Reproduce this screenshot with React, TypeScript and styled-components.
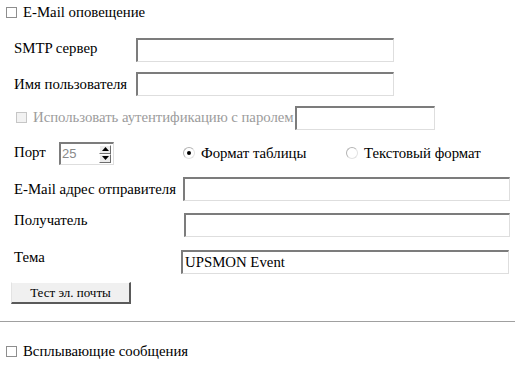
import styled, { createGlobalStyle } from "styled-components";

const GlobalStyle = createGlobalStyle`
  body {
    margin: 0;
    background: #ffffff;
  }
`;

const Page = styled.div`
  width: 515px;
  height: 365px;
  overflow: hidden;
  font-family: "Liberation Serif", "DejaVu Serif", serif;
  font-size: 14.8px;
  color: #000000;
`;

const CheckRow = styled.label<{ $disabled?: boolean }>`
  display: flex;
  align-items: center;
  gap: 6px;
  color: ${(p) => (p.$disabled ? "#9c9c9c" : "#000")};
  white-space: nowrap;
`;

const AuthCheck = styled(CheckRow)`
  width: 279px;
  margin-left: 2px;
  flex: none;
  letter-spacing: -0.05px;
`;

const Box = styled.span<{ $disabled?: boolean }>`
  display: inline-block;
  width: 9px;
  height: 9px;
  border: 1px solid ${(p) => (p.$disabled ? "#c6c6c6" : "#8e8e8e")};
  background: ${(p) => (p.$disabled ? "#f2f2f2" : "#fff")};
  flex: none;
`;

const Header = styled.div`
  padding: 2px 0 0 6px;
  height: 20px;
  display: flex;
  align-items: center;
`;

const Form = styled.div`
  padding: 11px 0 0 14px;
  display: flex;
  flex-direction: column;
`;

const Row = styled.div<{ $h: number }>`
  display: flex;
  align-items: center;
  height: ${(p) => p.$h}px;
`;

const Label = styled.span<{ $w: number; $dy?: number }>`
  width: ${(p) => p.$w}px;
  flex: none;
  white-space: nowrap;
  position: relative;
  top: ${(p) => p.$dy ?? 0}px;
`;

const Field = styled.div<{ $w: number }>`
  width: ${(p) => p.$w}px;
  height: 24px;
  box-sizing: border-box;
  border-top: 2px solid #7c7c7c;
  border-left: 2px solid #7c7c7c;
  border-right: 1px solid #dedede;
  border-bottom: 1px solid #dedede;
  background: #fff;
  display: flex;
  align-items: center;
  padding-left: 2px;
  flex: none;
`;

const Spinner = styled.div`
  width: 55px;
  height: 23px;
  margin-left: 30px;
  box-sizing: border-box;
  border-top: 2px solid #7c7c7c;
  border-left: 2px solid #7c7c7c;
  border-right: 1px solid #dedede;
  border-bottom: 1px solid #dedede;
  display: flex;
  align-items: center;
  justify-content: space-between;
  padding: 0 2px 0 1px;
  flex: none;
`;

const SpinValue = styled.span`
  font-family: "Liberation Sans", Arial, sans-serif;
  font-size: 13px;
  color: #8a8a8a;
`;

const SpinButtons = styled.div`
  display: flex;
  flex-direction: column;
  width: 12px;
  height: 18px;
`;

const SpinButton = styled.div`
  flex: 1;
  background: #ececec;
  border-top: 1px solid #fff;
  border-left: 1px solid #fff;
  border-right: 1px solid #6e6e6e;
  border-bottom: 1px solid #6e6e6e;
  display: flex;
  align-items: center;
  justify-content: center;
`;

const Radio = styled.label<{ $w?: number }>`
  display: flex;
  align-items: center;
  gap: 6px;
  white-space: nowrap;
  ${(p) => (p.$w ? `width: ${p.$w}px; flex: none;` : "")}
`;

const Circle = styled.span<{ $on?: boolean }>`
  width: 10px;
  height: 10px;
  border-radius: 50%;
  border: 1px solid #b4b4b4;
  border-bottom-color: #e2e2e2;
  border-right-color: #e2e2e2;
  background: #fff;
  display: flex;
  align-items: center;
  justify-content: center;
  &::after {
    content: "";
    width: 4px;
    height: 4px;
    border-radius: 50%;
    background: ${(p) => (p.$on ? "#000" : "transparent")};
  }
`;

const RadioGroup = styled.div`
  display: flex;
  margin-left: 69px;
`;

const TestButton = styled.div`
  width: 120px;
  height: 22px;
  margin-left: -3px;
  box-sizing: border-box;
  background: #f0f0f0;
  border-top: 1px solid #ffffff;
  border-left: 1px solid #e3e3e3;
  border-right: 2px solid #5a5a5a;
  border-bottom: 2px solid #5a5a5a;
  display: flex;
  align-items: center;
  justify-content: center;
  font-size: 13px;
`;

const Divider = styled.hr`
  margin: 16px 0 0 0;
  border: none;
  border-top: 1px solid #a0a0a0;
  height: 0;
`;

const Footer = styled.div`
  padding: 21px 0 0 6px;
`;

function Arrow({ up }: { up?: boolean }) {
  return (
    <svg width="7" height="4" viewBox="0 0 7 4">
      <path d={up ? "M0 4 L3.5 0 L7 4 Z" : "M0 0 L3.5 4 L7 0 Z"} fill="#000" />
    </svg>
  );
}

export default function App() {
  return (
    <Page>
      <GlobalStyle />
      <Header>
        <CheckRow>
          <Box />
          E-Mail оповещение
        </CheckRow>
      </Header>
      <Form>
        <Row $h={34}>
          <Label $w={122} $dy={-2}>SMTP сервер</Label>
          <Field $w={258} />
        </Row>
        <Row $h={34}>
          <Label $w={122}>Имя пользователя</Label>
          <Field $w={258} />
        </Row>
        <Row $h={33}>
          <AuthCheck $disabled>
            <Box $disabled />
            Использовать аутентификацию с паролем
          </AuthCheck>
          <Field $w={140} />
        </Row>
        <Row $h={38}>
          <Label $w={15} $dy={-1}>Порт</Label>
          <Spinner>
            <SpinValue>25</SpinValue>
            <SpinButtons>
              <SpinButton>
                <Arrow up />
              </SpinButton>
              <SpinButton>
                <Arrow />
              </SpinButton>
            </SpinButtons>
          </Spinner>
          <RadioGroup>
            <Radio $w={163}>
              <Circle $on />
              Формат таблицы
            </Radio>
            <Radio>
              <Circle />
              Текстовый формат
            </Radio>
          </RadioGroup>
        </Row>
        <Row $h={34}>
          <Label $w={169}>E-Mail адрес отправителя</Label>
          <Field $w={327} />
        </Row>
        <Row $h={37}>
          <Label $w={170} $dy={-4}>Получатель</Label>
          <Field $w={326} />
        </Row>
        <Row $h={38}>
          <Label $w={167} $dy={-5}>Тема</Label>
          <Field $w={328}>UPSMON Event</Field>
        </Row>
        <Row $h={24}>
          <TestButton>Тест эл. почты</TestButton>
        </Row>
      </Form>
      <Divider />
      <Footer>
        <CheckRow>
          <Box />
          Всплывающие сообщения
        </CheckRow>
      </Footer>
    </Page>
  );
}
